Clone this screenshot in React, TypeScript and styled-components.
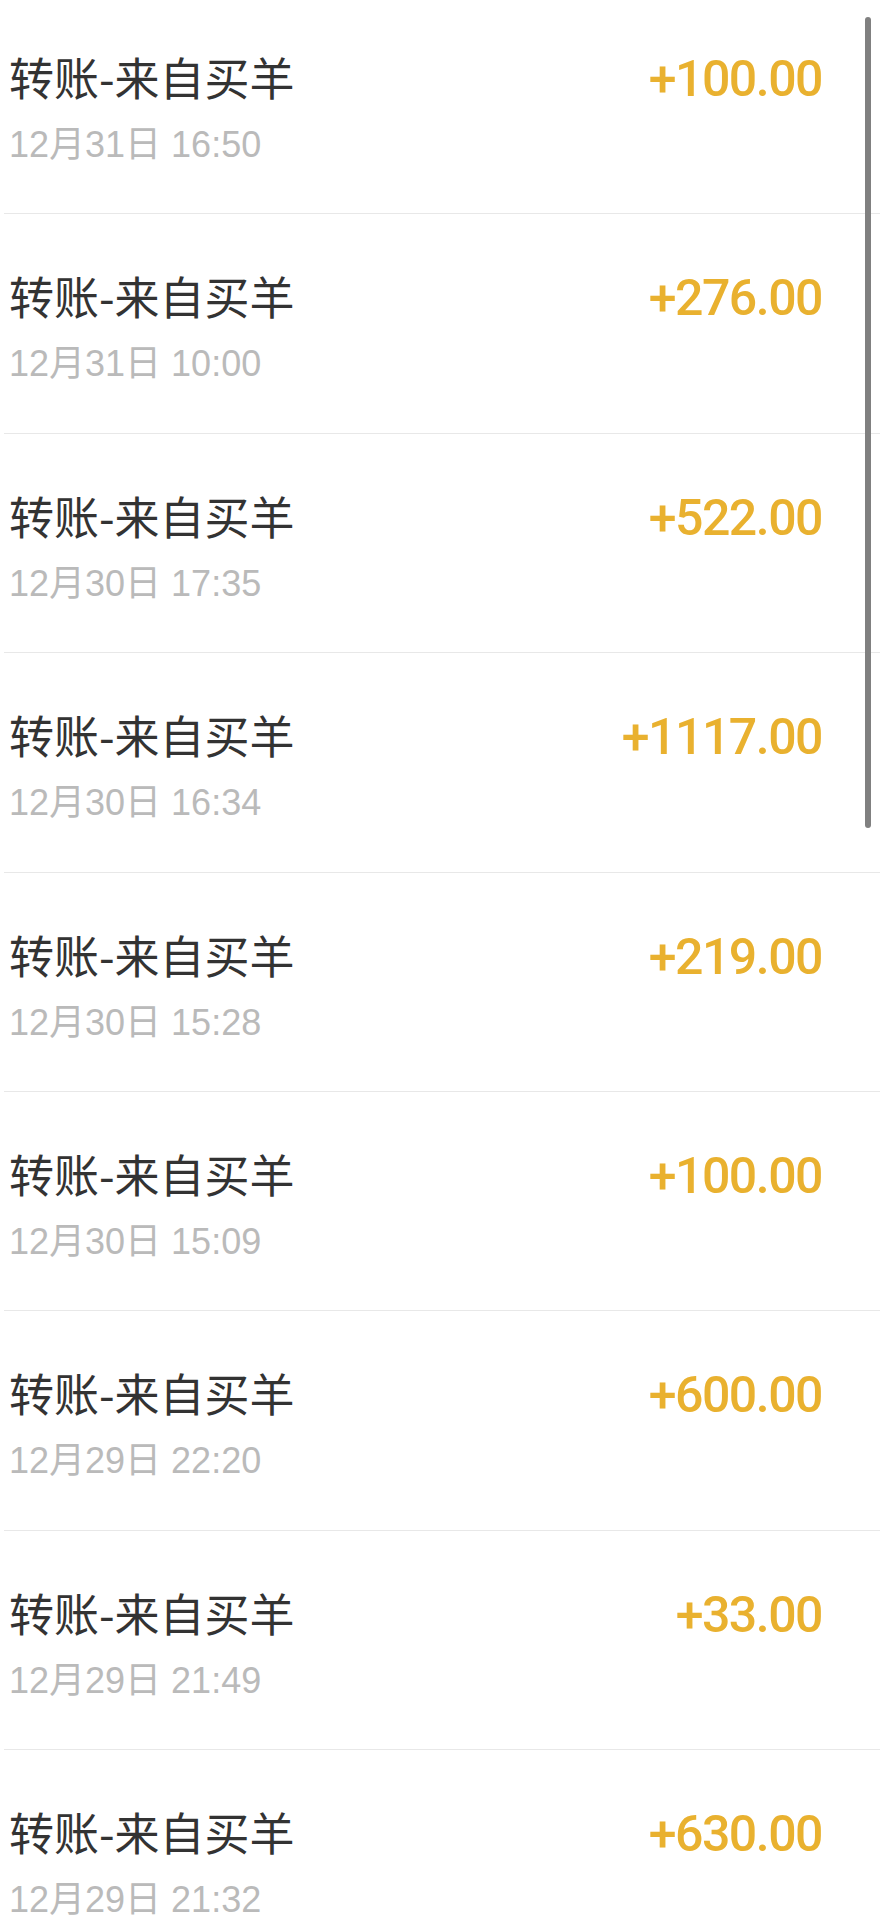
import React from "react";
import styled, { createGlobalStyle } from "styled-components";

type Record = {
  title: string;
  time: string;
  amount: string;
};

const records: Record[] = [
  { title: "转账-来自买羊", time: "12月31日 16:50", amount: "+100.00" },
  { title: "转账-来自买羊", time: "12月31日 10:00", amount: "+276.00" },
  { title: "转账-来自买羊", time: "12月30日 17:35", amount: "+522.00" },
  { title: "转账-来自买羊", time: "12月30日 16:34", amount: "+1117.00" },
  { title: "转账-来自买羊", time: "12月30日 15:28", amount: "+219.00" },
  { title: "转账-来自买羊", time: "12月30日 15:09", amount: "+100.00" },
  { title: "转账-来自买羊", time: "12月29日 22:20", amount: "+600.00" },
  { title: "转账-来自买羊", time: "12月29日 21:49", amount: "+33.00" },
  { title: "转账-来自买羊", time: "12月29日 21:32", amount: "+630.00" },
];

const App: React.FC = () => {
  return (
    <>
      <GlobalStyle />
      <Screen>
        <List>
          {records.map((r, i) => (
            <Row key={i}>
              <Info>
                <Title>{r.title}</Title>
                <Time>{r.time}</Time>
              </Info>
              <Amount>{r.amount}</Amount>
            </Row>
          ))}
        </List>
        <ScrollThumb />
      </Screen>
    </>
  );
};

const GlobalStyle = createGlobalStyle`
  html, body {
    margin: 0;
    padding: 0;
    background: #ffffff;
  }
`;

const Screen = styled.div`
  position: relative;
  width: 880px;
  height: 1920px;
  overflow: hidden;
  background: #ffffff;
`;

const List = styled.div`
  display: flex;
  flex-direction: column;
  margin-top: -5px;
  padding-left: 4px;
`;

const Row = styled.div`
  display: flex;
  justify-content: space-between;
  align-items: flex-start;
  height: 219.4px;
  box-sizing: border-box;
  padding: 52px 58px 0 5px;
  border-bottom: 1.5px solid #e8e8e8;
`;

const Info = styled.div`
  display: flex;
  flex-direction: column;
`;

const Title = styled.span`
  font-family: "Noto Sans CJK SC", "Noto Sans", sans-serif;
  font-size: 45px;
  line-height: 60px;
  color: #333333;
`;

const Time = styled.span`
  margin-top: 16px;
  font-family: "Liberation Sans", "Noto Sans CJK SC", sans-serif;
  font-size: 36px;
  line-height: 44px;
  color: #bababa;
`;

const Amount = styled.span`
  margin-top: 2px;
  font-family: Roboto, "Noto Sans", sans-serif;
  font-weight: 500;
  font-size: 50px;
  line-height: 60px;
  letter-spacing: -1.5px;
  color: #e9b12f;
`;

/* overlay scrollbar of the list */
const ScrollThumb = styled.div`
  position: absolute;
  top: 17px;
  right: 9px;
  width: 6px;
  height: 811px;
  border-radius: 3px;
  background: #808080;
`;

export default App;
